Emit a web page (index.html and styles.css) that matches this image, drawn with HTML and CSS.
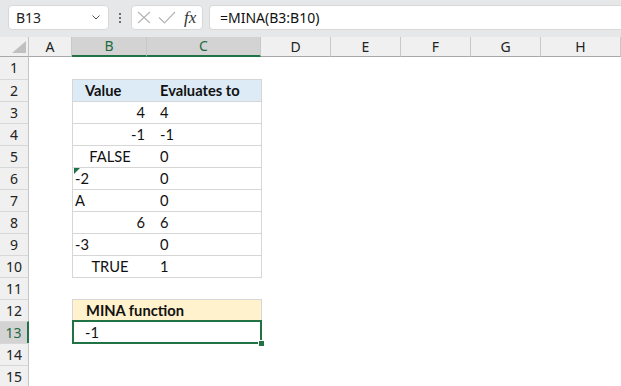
FILE: index.html
```html
<!DOCTYPE html>
<html>
<head>
<meta charset="utf-8">
<link rel="stylesheet" href="styles.css">
</head>
<body>
<div class="app">
  <div class="fbar">
    <div class="namebox">
      <span class="nb-text">B13</span>
      <svg class="chev" width="8" height="5" viewBox="0 0 8 5"><path d="M0.5 0.5 L4 4 L7.5 0.5" fill="none" stroke="#555" stroke-width="1"/></svg>
    </div>
    <div class="dots"><span></span><span></span><span></span></div>
    <div class="fxbox">
      <svg class="ico" width="14" height="13" viewBox="0 0 14 13"><path d="M1 1 L13 12 M13 1 L1 12" fill="none" stroke="#b4b4b4" stroke-width="1.1"/></svg>
      <svg class="ico" width="18" height="13" viewBox="0 0 18 13"><path d="M1 6.5 L6.5 12 L17 1" fill="none" stroke="#b4b4b4" stroke-width="1.1"/></svg>
      <span class="fx">fx</span>
    </div>
    <div class="finput">=MINA(B3:B10)</div>
  </div>

  <div class="sheet">
    <div class="colhdr">
      <div class="corner"><svg width="14" height="12" viewBox="0 0 14 12"><path d="M14 0 L14 12 L0 12 Z" fill="#c0c0c0"/></svg></div>
      <div class="ch">A</div>
      <div class="ch sel">B</div>
      <div class="ch sel">C</div>
      <div class="ch">D</div>
      <div class="ch">E</div>
      <div class="ch">F</div>
      <div class="ch">G</div>
      <div class="ch">H</div>
      <div class="ch"></div>
    </div>

    <div class="row first"><div class="rh">1</div></div>
    <div class="row"><div class="rh">2</div><div></div><div class="c th bl tp">Value</div><div class="c th cc tp rr">Evaluates to</div></div>
    <div class="row"><div class="rh">3</div><div></div><div class="c bl r">4</div><div class="c cc rr">4</div></div>
    <div class="row"><div class="rh">4</div><div></div><div class="c bl r">-1</div><div class="c cc rr">-1</div></div>
    <div class="row"><div class="rh">5</div><div></div><div class="c bl ctr">FALSE</div><div class="c cc rr">0</div></div>
    <div class="row"><div class="rh">6</div><div></div><div class="c bl l err">-2</div><div class="c cc rr">0</div></div>
    <div class="row"><div class="rh">7</div><div></div><div class="c bl l">A</div><div class="c cc rr">0</div></div>
    <div class="row"><div class="rh">8</div><div></div><div class="c bl r">6</div><div class="c cc rr">6</div></div>
    <div class="row"><div class="rh">9</div><div></div><div class="c bl l">-3</div><div class="c cc rr">0</div></div>
    <div class="row"><div class="rh">10</div><div></div><div class="c bl ctr bb">TRUE</div><div class="c cc rr bb">1</div></div>
    <div class="row"><div class="rh">11</div></div>
    <div class="row"><div class="rh">12</div><div></div><div class="c mh bl tp rr span2">MINA function</div></div>
    <div class="row"><div class="rh rsel">13</div><div></div><div class="c res span2">-1<div class="selbox"><div class="handle"></div></div></div></div>
    <div class="row"><div class="rh">14</div></div>
    <div class="row"><div class="rh">15</div></div>
  </div>
</div>
</body>
</html>
```

FILE: styles.css
```css
html, body {
  margin: 0;
  padding: 0;
  background: #ffffff;
}
.app {
  width: 621px;
  height: 386px;
  overflow: hidden;
  font-family: "Noto Sans", "Open Sans", sans-serif;
}

/* formula bar */
.fbar {
  height: 37px;
  background: #e6e7e9;
  display: flex;
  align-items: flex-start;
  padding-top: 5px;
  box-sizing: border-box;
}
.namebox {
  margin-left: 8px;
  width: 101px;
  height: 25px;
  box-sizing: border-box;
  background: #fff;
  border: 1px solid #d8d8d8;
  border-radius: 4px;
  display: flex;
  align-items: center;
  justify-content: space-between;
  padding: 0 8px 0 7px;
}
.nb-text {
  font-size: 14px;
  color: #222;
}
.chev { display: block; }
.dots {
  width: 22px;
  height: 25px;
  display: flex;
  flex-direction: column;
  align-items: center;
  justify-content: center;
  gap: 2px;
}
.dots span {
  width: 2px;
  height: 2px;
  background: #444;
  border-radius: 1px;
}
.fxbox {
  width: 72px;
  height: 25px;
  box-sizing: border-box;
  background: #fff;
  border: 1px solid #d8d8d8;
  border-radius: 4px;
  display: flex;
  align-items: center;
  padding-left: 5px;
  gap: 7px;
}
.ico { display: block; }
.fx {
  font-family: "Liberation Serif", "DejaVu Serif", serif;
  font-style: italic;
  font-size: 17px;
  color: #333;
  margin-left: 1px;
}
.finput {
  margin-left: 6px;
  flex: 1;
  height: 25px;
  box-sizing: border-box;
  background: #fff;
  border: 1px solid #d8d8d8;
  border-right: none;
  border-radius: 4px 0 0 4px;
  font-size: 14px;
  color: #111;
  line-height: 23px;
  padding-left: 10px;
}

/* column header */
.colhdr {
  display: grid;
  grid-template-columns: 29px 43px 75px 114px 70px 70px 70px 70px 1fr;
  height: 20px;
  background: #f0f0f0;
}
.corner {
  border-right: 1px solid #c4c4c4;
  border-bottom: 1px solid #a8a8a8;
  display: flex;
  align-items: flex-end;
  justify-content: flex-end;
  padding: 0 2px 3px 0;
}
.corner svg { display: block; }
.ch {
  border-right: 1px solid #c8c8c8;
  border-bottom: 1px solid #a8a8a8;
  font-size: 14px;
  color: #222;
  text-align: center;
  line-height: 19px;
}
.ch.sel {
  background: #d3d3d3;
  color: #1e6b40;
  border-bottom: 2px solid #217346;
  line-height: 18px;
}
.ch, .corner { box-sizing: border-box; }

/* rows */
.row {
  display: grid;
  grid-template-columns: 29px 43px 75px 115px 1fr;
  height: 22px;
}
.rh {
  box-sizing: border-box;
  background: #f0f0f0;
  border-right: 1px solid #c4c4c4;
  border-top: 1px solid #d8d8d8;
  font-size: 14px;
  color: #222;
  text-align: center;
  line-height: 21px;
}
.row.first .rh {
  border-top: none;
  line-height: 22px;
}
.rh.rsel {
  background: #d3d3d3;
  color: #1e6b40;
  border-right: 2px solid #217346;
}

/* cells */
.c {
  box-sizing: border-box;
  font-family: "Lato", "Carlito", sans-serif;
  font-size: 14.7px;
  color: #111;
  line-height: 21px;
  border-top: 1px solid #d6d6d6;
  white-space: nowrap;
  position: relative;
}
.bl { border-left: 1px solid #d6d6d6; }
.rr { border-right: 1px solid #d6d6d6; }
.bb { box-shadow: 0 1px 0 #d6d6d6; }
.rr.bb { box-shadow: 0 1px 0 #d6d6d6; }
.th {
  background: #ddebf7;
  font-weight: bold;
  padding-left: 12px;
}
.cc { padding-left: 13px; }
.r { text-align: right; padding-right: 2px; }
.l { padding-left: 2px; }
.ctr { text-align: center; }
.span2 { grid-column: 3 / span 2; }
.mh {
  background: #fff2cc;
  font-weight: bold;
  padding-left: 13px;
}
.res {
  border-top: none;
  padding-left: 13px;
  line-height: 22px;
}
.err::before {
  content: "";
  position: absolute;
  left: 1px;
  top: 0;
  width: 0;
  height: 0;
  border-top: 6px solid #1e7145;
  border-right: 6px solid transparent;
}
.selbox {
  position: absolute;
  left: 0;
  right: 0;
  top: -1px;
  bottom: -1px;
  border: 2px solid #217346;
}
.handle {
  position: absolute;
  right: -4px;
  bottom: -4px;
  width: 5px;
  height: 5px;
  background: #217346;
  border: 1px solid #fff;
  border-bottom: none;
  border-right: none;
}
```
